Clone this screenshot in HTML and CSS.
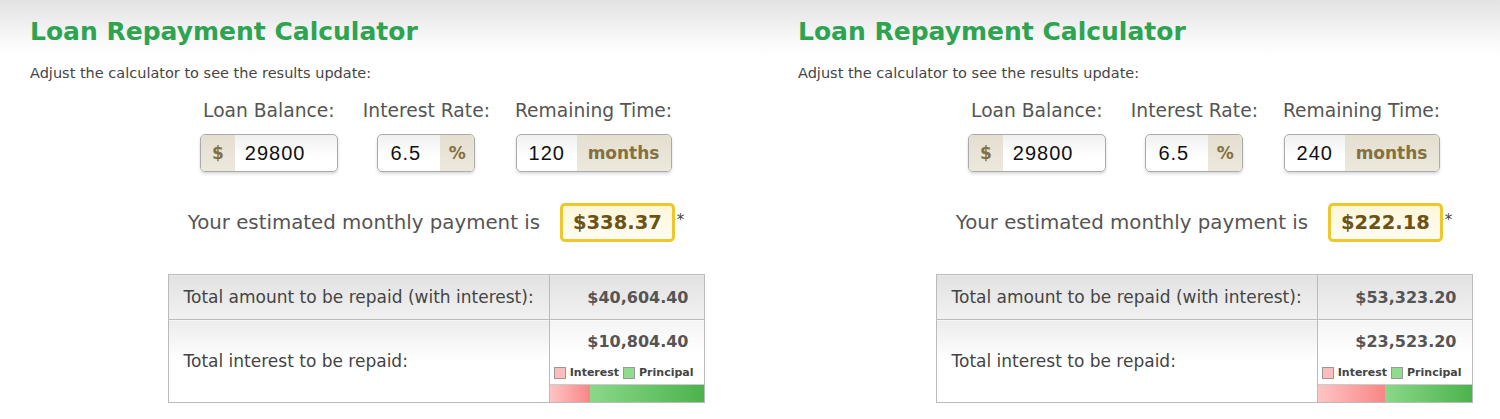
FILE: index.html
```html
<!DOCTYPE html>
<html>
<head>
<meta charset="utf-8">
<link rel="stylesheet" href="styles.css">
</head>
<body>
<div class="page">
  <section class="panel">
    <h1 class="title">Loan Repayment Calculator</h1>
    <p class="intro">Adjust the calculator to see the results update:</p>
    <div class="calc">
      <div class="fields">
        <div class="field">
          <div class="label">Loan Balance:</div>
          <div class="box box-balance"><span class="addon addon-left">$</span><span class="val">29800</span></div>
        </div>
        <div class="field">
          <div class="label">Interest Rate:</div>
          <div class="box box-rate"><span class="val">6.5</span><span class="addon">%</span></div>
        </div>
        <div class="field">
          <div class="label">Remaining Time:</div>
          <div class="box box-time"><span class="val">120</span><span class="addon addon-months">months</span></div>
        </div>
      </div>
      <div class="payment">
        <span class="payment-text">Your estimated monthly payment is</span>
        <span class="payment-box">$338.37</span><span class="star">*</span>
      </div>
      <table class="results">
        <colgroup><col class="col-label"><col class="col-value"></colgroup>
        <tr class="row-total">
          <td class="cell-label">Total amount to be repaid (with interest):</td>
          <td class="cell-value">$40,604.40</td>
        </tr>
        <tr class="row-interest">
          <td class="cell-label">Total interest to be repaid:</td>
          <td class="cell-value cell-chart">
            <div class="chart-value">$10,804.40</div>
            <div class="legend"><span class="sw sw-int"></span>Interest <span class="sw sw-pri"></span>Principal</div>
            <div class="bar"><div class="bar-int" style="width:26.6%"></div><div class="bar-pri"></div></div>
          </td>
        </tr>
      </table>
    </div>
  </section>
  <section class="panel">
    <h1 class="title">Loan Repayment Calculator</h1>
    <p class="intro">Adjust the calculator to see the results update:</p>
    <div class="calc">
      <div class="fields">
        <div class="field">
          <div class="label">Loan Balance:</div>
          <div class="box box-balance"><span class="addon addon-left">$</span><span class="val">29800</span></div>
        </div>
        <div class="field">
          <div class="label">Interest Rate:</div>
          <div class="box box-rate"><span class="val">6.5</span><span class="addon">%</span></div>
        </div>
        <div class="field">
          <div class="label">Remaining Time:</div>
          <div class="box box-time"><span class="val">240</span><span class="addon addon-months">months</span></div>
        </div>
      </div>
      <div class="payment">
        <span class="payment-text">Your estimated monthly payment is</span>
        <span class="payment-box">$222.18</span><span class="star">*</span>
      </div>
      <table class="results">
        <colgroup><col class="col-label"><col class="col-value"></colgroup>
        <tr class="row-total">
          <td class="cell-label">Total amount to be repaid (with interest):</td>
          <td class="cell-value">$53,323.20</td>
        </tr>
        <tr class="row-interest">
          <td class="cell-label">Total interest to be repaid:</td>
          <td class="cell-value cell-chart">
            <div class="chart-value">$23,523.20</div>
            <div class="legend"><span class="sw sw-int"></span>Interest <span class="sw sw-pri"></span>Principal</div>
            <div class="bar"><div class="bar-int" style="width:44.1%"></div><div class="bar-pri"></div></div>
          </td>
        </tr>
      </table>
    </div>
  </section>
</div>
</body>
</html>
```

FILE: styles.css
```css
html, body {
  margin: 0;
  padding: 0;
}
body {
  width: 1500px;
  height: 419px;
  overflow: hidden;
  background: #fff linear-gradient(#e2e2e2 0px, #f6f6f6 35px, #ffffff 55px) no-repeat;
  background-size: 100% 60px;
  font-family: "DejaVu Sans", sans-serif;
  color: #444;
}
.page {
  display: grid;
  grid-template-columns: 768px 768px;
}
.panel {
  padding: 0 0 0 30px;
}
.title {
  margin: 17px 0 0;
  font-size: 25px;
  line-height: 30px;
  font-weight: bold;
  color: #2ea351;
}
.intro {
  margin: 17px 0 0;
  font-size: 14.5px;
  line-height: 18px;
  color: #444;
}
.calc {
  margin-left: 138px;
  width: 536px;
  display: flex;
  flex-direction: column;
  align-items: center;
}
.fields {
  display: flex;
  gap: 25px;
  margin-top: 17px;
}
.field {
  display: flex;
  flex-direction: column;
  align-items: center;
}
.label {
  font-size: 18.7px;
  line-height: 24px;
  color: #555;
  white-space: nowrap;
}
.box {
  margin-top: 11px;
  height: 36px;
  display: flex;
  border: 1px solid #aaa;
  border-radius: 5px;
  overflow: hidden;
  box-shadow: 0 2px 3px rgba(0,0,0,0.15);
  background: linear-gradient(#f0f0f0, #ffffff 60%);
}
.val {
  font-family: "Liberation Sans", Arial, sans-serif;
  font-size: 20px;
  letter-spacing: 1px;
  line-height: 36px;
  color: #111;
  padding: 0 10px;
}
.box-balance { width: 136px; }
.box-balance .val { flex: 1; padding-left: 10px; }
.box-rate { width: 96px; }
.box-rate .val { flex: 1; padding-left: 12px; }
.box-time { width: 154px; }
.box-time .val { flex: 1; padding-left: 12px; }
.addon {
  background: linear-gradient(#e4dfd0, #ece8dc);
  color: #85703f;
  font-weight: bold;
  font-size: 17px;
  line-height: 36px;
  width: 34px;
  text-align: center;
}
.addon-months {
  width: 94px;
}
.payment {
  margin-top: 31px;
  display: flex;
  align-items: center;
  white-space: nowrap;
}
.payment-text {
  font-size: 19.8px;
  color: #555;
  margin-right: 20px;
}
.payment-box {
  border: 3px solid #efc62c;
  border-radius: 5px;
  background: linear-gradient(#fdf6d8, #fffdf3);
  color: #6b5316;
  font-weight: bold;
  font-size: 19.5px;
  line-height: 33px;
  padding: 0 10px;
}
.star {
  font-size: 15px;
  color: #444;
  margin-left: 2px;
  align-self: flex-start;
  margin-top: 8px;
}
.results {
  margin-top: 32px;
  width: 536px;
  table-layout: fixed;
  border-collapse: collapse;
  font-size: 17px;
}
.col-label { width: 381px; }
.col-value { width: 155px; }
.results td {
  border: 1px solid #bbb;
  padding: 0 15px;
  white-space: nowrap;
}
.row-total td {
  height: 44px;
  background: linear-gradient(#e2e2e2, #f1f1f1);
}
.row-interest td {
  height: 82px;
}
.row-interest .cell-label {
  background: linear-gradient(#ececec, #ffffff 50%);
}
.cell-label {
  color: #444;
}
.cell-value {
  text-align: right;
  font-weight: bold;
  font-size: 16px;
  color: #555;
}
.cell-chart {
  padding: 0 !important;
  vertical-align: top;
  background: linear-gradient(#f4f4f4, #ffffff 40%);
}
.chart-value {
  padding: 11px 15px 0 0;
  line-height: 22px;
}
.legend {
  font-size: 11px;
  line-height: 14px;
  color: #444;
  padding: 13px 10px 0 0;
  display: flex;
  justify-content: flex-end;
  align-items: center;
  gap: 2px;
}
.sw {
  display: inline-block;
  width: 10px;
  height: 10px;
  border: 1px solid #999;
  margin-right: 2px;
}
.sw-int { background: #ffbcbc; }
.sw-pri { background: #8fdc8f; margin-left: 2px; }
.bar {
  margin-top: 4px;
  height: 17px;
  display: flex;
  border-top: 1px solid #ccc;
}
.bar-int {
  background: linear-gradient(90deg, #ffc4c4, #f88686);
}
.bar-pri {
  flex: 1;
  background: linear-gradient(90deg, #8ad88a, #4cb34c);
}
```
